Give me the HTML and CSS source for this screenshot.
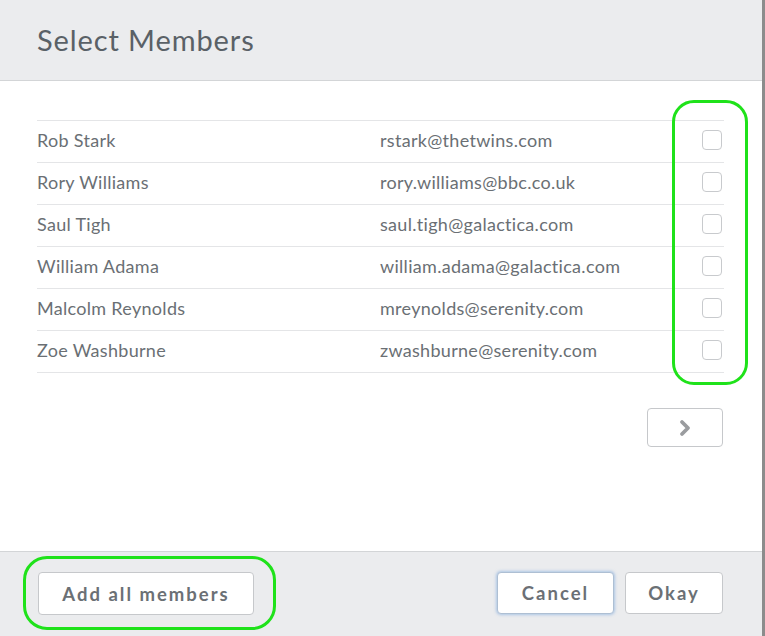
FILE: index.html
```html
<!DOCTYPE html>
<html>
<head>
<meta charset="utf-8">
<link rel="stylesheet" href="styles.css">
</head>
<body>
<div class="dialog">
  <div class="header"><h1 class="title">Select Members</h1></div>
  <div class="content">
    <div class="list">
      <div class="row"><span class="name">Rob Stark</span><span class="email">rstark@thetwins.com</span><span class="check"></span></div>
      <div class="row"><span class="name">Rory Williams</span><span class="email">rory.williams@bbc.co.uk</span><span class="check"></span></div>
      <div class="row"><span class="name">Saul Tigh</span><span class="email">saul.tigh@galactica.com</span><span class="check"></span></div>
      <div class="row"><span class="name">William Adama</span><span class="email">william.adama@galactica.com</span><span class="check"></span></div>
      <div class="row"><span class="name">Malcolm Reynolds</span><span class="email">mreynolds@serenity.com</span><span class="check"></span></div>
      <div class="row"><span class="name">Zoe Washburne</span><span class="email">zwashburne@serenity.com</span><span class="check"></span></div>
    </div>
    <div class="pager">
      <button class="btn next" type="button"><svg width="16" height="18" viewBox="0 0 16 18"><path d="M5 3 L11 9 L5 15" fill="none" stroke="#9a9c9f" stroke-width="3.8" stroke-linecap="round" stroke-linejoin="round"/></svg></button>
    </div>
    <div class="hl hl-checks"></div>
  </div>
  <div class="footer">
    <button class="btn add" type="button">Add all members</button>
    <div class="actions">
      <button class="btn cancel" type="button">Cancel</button>
      <button class="btn okay" type="button">Okay</button>
    </div>
    <div class="hl hl-add"></div>
  </div>
</div>
</body>
</html>
```
FILE: styles.css
```css
html, body { margin: 0; padding: 0; background: #fff; }
body { font-family: "Lato", "Open Sans", sans-serif; color: #6a6f74; }
.dialog {
  width: 762px; height: 636px;
  border-right: 3px solid #8c8c8c;
  display: flex; flex-direction: column;
  position: relative;
}
.header {
  background: #ebecee;
  border-bottom: 1px solid #d3d5d7;
  padding-left: 37px;
  display: flex; align-items: center;
  box-sizing: border-box; height: 81px;
}
.title {
  margin: 0; font-weight: 400; font-size: 29px;
  color: #5a6167; letter-spacing: 0.9px;
  padding-bottom: 2px;
}
.content {
  flex: 1; position: relative;
  padding: 39px 38px 0 37px;
}
.list { border-bottom: 1px solid #e4e5e7; }
.row {
  border-top: 1px solid #e4e5e7;
  display: flex; align-items: center;
  box-sizing: border-box; height: 42px; padding-bottom: 4px;
  font-size: 18px; letter-spacing: 0.3px; color: #6a6f74;
}
.name { width: 343px; }
.email { flex: 1; }
.check {
  width: 18px; height: 18px;
  border: 1.5px solid #c8cacd; border-radius: 4px;
  margin-right: 2px;
}
.pager { display: flex; justify-content: flex-end; margin-top: 35px; margin-right: 1px; }
.btn {
  font-family: "Lato", "Open Sans", sans-serif;
  background: #fff; border: 1.5px solid #c6c8cb; border-radius: 4px;
  color: #6b7075; font-weight: 700; font-size: 18.5px; letter-spacing: 2px;
  padding: 0; cursor: pointer;
}
.next { width: 76px; height: 39px; display: flex; align-items: center; justify-content: center; }
.footer {
  height: 85px; background: #ebecee;
  border-top: 1px solid #d3d5d7;
  display: flex; align-items: flex-start; justify-content: space-between;
  padding: 20px 39px 0 38px;
  box-sizing: border-box; position: relative;
}
.add { width: 216px; height: 43px; }
.actions { display: flex; gap: 11px; }
.cancel {
  width: 117px; height: 42px;
  border-color: #aebfd3;
  box-shadow: 0 0 3px 1px rgba(120, 165, 220, 0.55);
}
.okay { width: 98px; height: 42px; }
.hl {
  position: absolute; border: 3px solid #1fe21a; box-sizing: border-box;
  pointer-events: none;
}
.hl-checks { left: 672px; top: 19px; width: 76px; height: 285px; border-radius: 22px; }
.hl-add { left: 23px; top: 4px; width: 253px; height: 74px; border-radius: 24px; }
```
